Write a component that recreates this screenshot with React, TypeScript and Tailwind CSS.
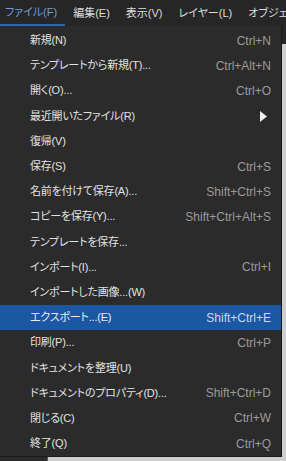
import React from 'react';

const MENUS = ['ファイル(F)', '編集(E)', '表示(V)', 'レイヤー(L)', 'オブジェクト(O)'];

const ITEMS: { label: string; key?: string; sub?: boolean; active?: boolean }[] = [
  { label: '新規(N)', key: 'Ctrl+N' },
  { label: 'テンプレートから新規(T)...', key: 'Ctrl+Alt+N' },
  { label: '開く(O)...', key: 'Ctrl+O' },
  { label: '最近開いたファイル(R)', sub: true },
  { label: '復帰(V)' },
  { label: '保存(S)', key: 'Ctrl+S' },
  { label: '名前を付けて保存(A)...', key: 'Shift+Ctrl+S' },
  { label: 'コピーを保存(Y)...', key: 'Shift+Ctrl+Alt+S' },
  { label: 'テンプレートを保存...' },
  { label: 'インポート(I)...', key: 'Ctrl+I' },
  { label: 'インポートした画像...(W)' },
  { label: 'エクスポート...(E)', key: 'Shift+Ctrl+E', active: true },
  { label: '印刷(P)...', key: 'Ctrl+P' },
  { label: 'ドキュメントを整理(U)' },
  { label: 'ドキュメントのプロパティ(D)...', key: 'Shift+Ctrl+D' },
  { label: '閉じる(C)', key: 'Ctrl+W' },
  { label: '終了(Q)', key: 'Ctrl+Q' },
];

const App: React.FC = () => {
  return (
    <div className="w-[286px] h-[461px] overflow-hidden bg-[#c9c9c9] flex flex-col font-['Liberation_Sans','Noto_Sans_CJK_JP',sans-serif] [font-feature-settings:'palt'] leading-none">
      {/* Menu bar */}
      <div className="h-[26px] shrink-0 bg-[#262626] flex items-stretch whitespace-nowrap text-[11px]">
        {MENUS.map((m, i) => (
          <div
            key={m}
            className={
              i === 0
                ? 'flex items-center pl-[5px] pr-[8px] text-[#6e9bd1] border-b-2 border-[#2f64b0]'
                : 'flex items-center px-[8px] text-[#dcdcdc]'
            }
          >
            {m}
          </div>
        ))}
      </div>

      <div className="flex flex-1 min-h-0">
        <div className="flex flex-col shrink-0">
          {/* Dropdown */}
          <div className="w-[282px] h-[431px] shrink-0 bg-[#2b2b2b] border-r border-b border-[#1a1a1a] pt-[2px] flex flex-col">
            {ITEMS.map((it) => (
              <div
                key={it.label}
                className={
                  'h-[25.2px] shrink-0 flex items-center pl-[30px] pr-[10px] ' +
                  (it.active ? 'bg-[#1b57a3] text-[#e8eef8]' : 'text-[#e2e2e2]')
                }
              >
                <span className="flex-1 text-[11px] tracking-[-0.2px]">{it.label}</span>
                {it.key && (
                  <span className={'text-[12px] ' + (it.active ? 'text-[#c9d8ee]' : 'text-[#9a9a9a]')}>
                    {it.key}
                  </span>
                )}
                {it.sub && (
                  <svg width="7" height="11" viewBox="0 0 7 11" className="mr-[4px]">
                    <path d="M0 0 L7 5.5 L0 11 Z" fill="#f0f0f0" />
                  </svg>
                )}
              </div>
            ))}
          </div>
          {/* What shows below the menu */}
          <div className="flex-1 flex">
            <div className="w-[48px] bg-[#2a2a2a] border-r border-[#555]" />
            <div className="flex-1 bg-[#cfcfcf]" />
          </div>
        </div>
        {/* Scrollbar strip */}
        <div className="flex-1 flex flex-col">
          <div className="h-[18px] bg-[#262626]" />
          <div className="flex-1 bg-[#cfcfcf]" />
        </div>
      </div>
    </div>
  );
};

export default App;
